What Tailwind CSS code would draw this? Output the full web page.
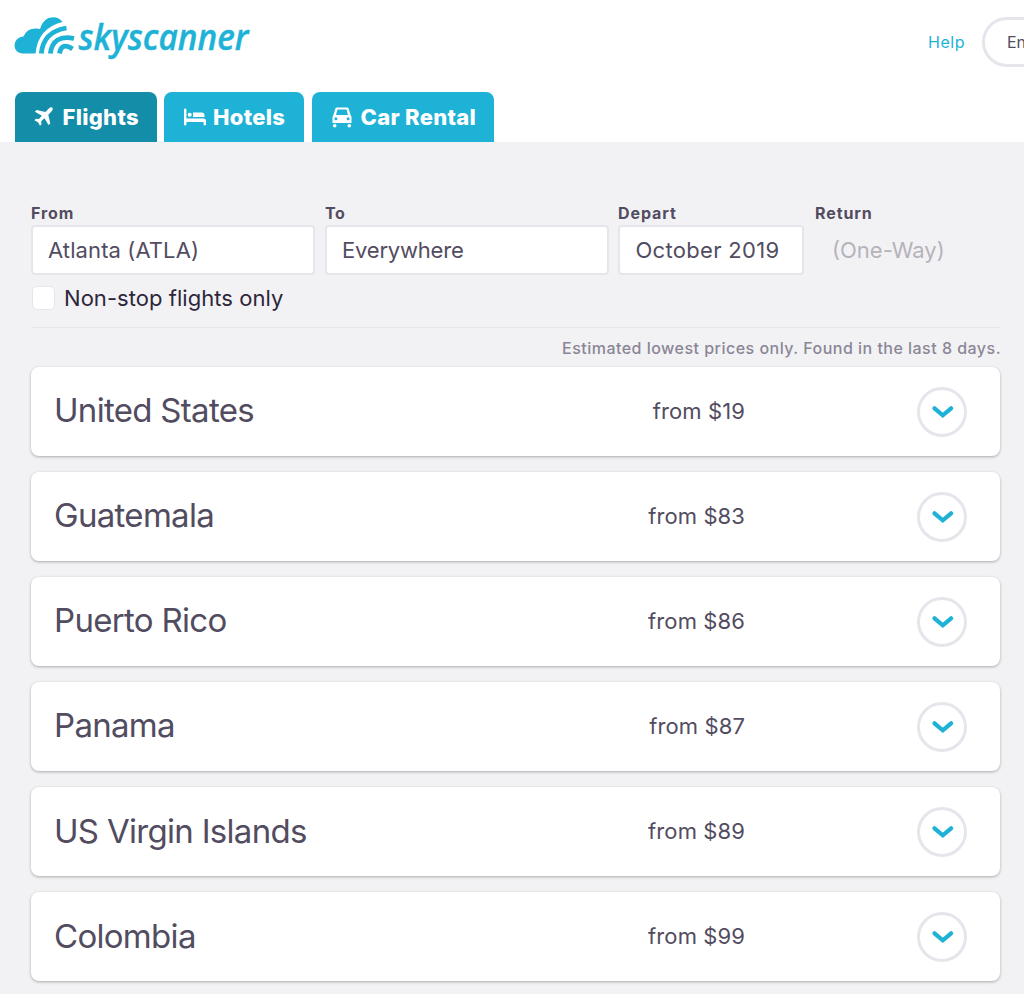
<!DOCTYPE html>
<html lang="en">
<head>
  <meta charset="UTF-8" />
  <meta name="viewport" content="width=device-width, initial-scale=1" />
  <title>Cheap flights from Atlanta | Skyscanner</title>
  <script src="https://cdn.jsdelivr.net/npm/@tailwindcss/browser@4"></script>
</head>
<body class="bg-[#f2f2f5] text-[#524c61] font-['Inter',sans-serif] h-[994px] overflow-hidden">

  <header class="bg-white h-[142px] flex flex-col justify-between overflow-hidden">
    <div class="flex items-start justify-between pl-[14px] pt-4">
      <a href="#" aria-label="skyscanner">
        <svg class="overflow-visible" width="246" height="46" viewBox="14 16 246 46" fill="#1eb2d6">
          <path d="M23 53.500C12 53.500 11.500 37.500 23.500 36.500Q27 28 36.500 28.500Q38.500 28.500 40 29Q43 17.500 53 17.200Q59.500 17.200 62.500 22Q38 28 35.500 53.500z" />
          <g fill="none" stroke="#1eb2d6" stroke-width="4.800">
            <path d="M41.300 53.500Q43.500 31.500 66.500 28" />
            <path d="M50.300 53.500Q53 34 74 38.500" />
            <path d="M59.500 53.500Q61.500 41.500 72.500 49" />
          </g>
          <text x="78.500" y="50" textLength="170" lengthAdjust="spacingAndGlyphs" font-family="Open Sans" font-size="36.500" font-weight="600" font-style="italic" stroke="#1eb2d6" stroke-width=".4">skyscanner</text>
        </svg>
      </a>
      <nav class="flex items-center gap-[17px] -mr-[42px] pt-px">
        <a href="#" class="text-[#1eb2d6] text-[16px] tracking-[0.5px]">Help</a>
        <button class="w-[84px] h-[50px] rounded-full border-3 border-[#e6e5eb] pl-[22px] text-left text-[16px]">English</button>
      </nav>
    </div>

    <ul class="flex gap-[7.500px] pl-[14.500px] h-[50px] text-white text-[22px] font-extrabold tracking-[0.3px]">
      <li class="w-[142px] h-[50px] rounded-t-lg bg-[#148da8] flex items-center pl-[18px] gap-2">
        <svg class="w-[22px] h-[22px]" viewBox="1 0 22 22" fill="white">
          <path d="M20.500 1.700q1 1.500-1 3.800l-3.200 3.300 2 8.700-1.800 1.600-4-6.800-3.300 3 .3 3-1.500 1.500-2-3.600-3.600-2 1.500-1.500 3 .3 3-3.300-7-4 1.700-1.800 8.800 2 3.200-3.200q2.300-2 3.900-1z" />
        </svg>
        <a href="#">Flights</a>
      </li>
      <li class="w-[140px] h-[50px] rounded-t-lg bg-[#1eb2d6] flex items-center pl-[19px] gap-[6px]">
        <svg class="w-6 h-[22px]" viewBox="0 0 24 22" fill="white">
          <path d="M1 3.500q0-1 1.200-1t1.200 1V12.500h17q2.600 0 2.600 2.500v3.500q0 1-1.200 1t-1.200-1V16H3.400v2.500q0 1-1.200 1T1 18.500z" />
          <circle cx="6.700" cy="8.700" r="2" />
          <path d="M10 6.500h8.500q3 0 3 3v1.500H10z" />
        </svg>
        <a href="#">Hotels</a>
      </li>
      <li class="w-[182px] h-[50px] rounded-t-lg bg-[#1eb2d6] flex items-center pl-[19px] gap-2">
        <svg class="w-[22px] h-[22px]" viewBox="0 0 22 22" fill="white" fill-rule="evenodd">
          <path d="M6 1.500h10q1.300 0 1.700 1.200l2 6.800q.8.700.8 2V17h-19v-5.500q0-1.300.8-2l2-6.800Q4.700 1.500 6 1.500zM6.500 3.500L5 9h12l-1.500-5.500zM3.400 12.700a1.500 1.500 0 1 0 3 0a1.500 1.500 0 1 0-3 0zM15.600 12.700a1.500 1.500 0 1 0 3 0a1.500 1.500 0 1 0-3 0z" />
          <circle cx="3.700" cy="19.700" r="1.800" /><circle cx="18.300" cy="19.700" r="1.800" />
        </svg>
        <a href="#">Car Rental</a>
      </li>
    </ul>
  </header>

  <main class="pl-[31px] pr-[23px] pt-[61px]">
    <form class="flex text-[22px]">
      <div class="w-[294px]">
        <label class="block h-[22px] text-[16px] leading-[20px] font-bold tracking-[0.9px]">From</label>
        <div class="w-[284px] h-[50px] rounded border-2 border-[#e6e5eb] bg-white flex items-center pl-[15px] tracking-[0.1px]">Atlanta (ATLA)</div>
      </div>
      <div class="w-[293px]">
        <label class="block h-[22px] text-[16px] leading-[20px] font-bold tracking-[0.5px]">To</label>
        <div class="w-[284px] h-[50px] rounded border-2 border-[#e6e5eb] bg-white flex items-center pl-[15px] tracking-[-0.2px]">Everywhere</div>
      </div>
      <div class="w-[197px]">
        <label class="block h-[22px] text-[16px] leading-[20px] font-bold tracking-[0.9px]">Depart</label>
        <div class="w-[186px] h-[50px] rounded border-2 border-[#e6e5eb] bg-white flex items-center pl-[15.500px] tracking-[0.3px]">October 2019</div>
      </div>
      <div>
        <label class="block h-[22px] text-[16px] leading-[20px] font-bold tracking-[0.9px]">Return</label>
        <div class="h-[50px] flex items-center pl-[17px] text-[#b5b3bb]">(One-Way)</div>
      </div>
    </form>

    <label class="flex items-center gap-[9px] mt-[11px] h-6 pl-[1px] text-[22px] tracking-[0.05px] text-[#2d2639]">
      <span class="w-[23px] h-6 rounded-[5px] border border-[#e6e5eb] bg-white"></span>
      <span>Non-stop flights only</span>
    </label>

    <div class="mt-[17px] border-t border-[#e6e5ea] h-[39.500px] flex justify-end items-center pt-px text-[16px] font-medium tracking-[0.48px] text-[#8a8695]">Estimated lowest prices only. Found in the last 8 days.</div>

    <ul id="destinations" class="flex flex-col gap-[16.200px]"></ul>
  </main>

  <script>
    const destinations = [
      ['United States', '$19'],
      ['Guatemala', '$83'],
      ['Puerto Rico', '$86'],
      ['Panama', '$87'],
      ['US Virgin Islands', '$89'],
      ['Colombia', '$99'],
    ];

    document.getElementById('destinations').innerHTML = destinations.map(([name, price]) => `
      <li class="h-[89px] w-[969px] rounded-lg bg-white shadow-[0_1px_3px_rgba(0,0,0,0.3)] flex items-center pl-[23px] pr-[33px]">
        <h3 class="flex-1 text-[33px] tracking-[-0.7px] pb-px">${name}</h3>
        <span class="text-[22px] tracking-[0.1px]">from ${price}</span>
        <button class="ml-[172px] mt-px w-[50px] h-[50px] rounded-full border-3 border-[#e6e5eb] flex items-center justify-center" aria-label="Show ${name}">
          <svg class="w-6 h-6" viewBox="0 0 24 24" fill="none" stroke="#1eb2d6" stroke-width="4.200" stroke-linecap="round"><path d="M4.500 8.300l8.300 7 8.300-7" /></svg>
        </button>
      </li>
    `).join('');
  </script>

</body>
</html>
